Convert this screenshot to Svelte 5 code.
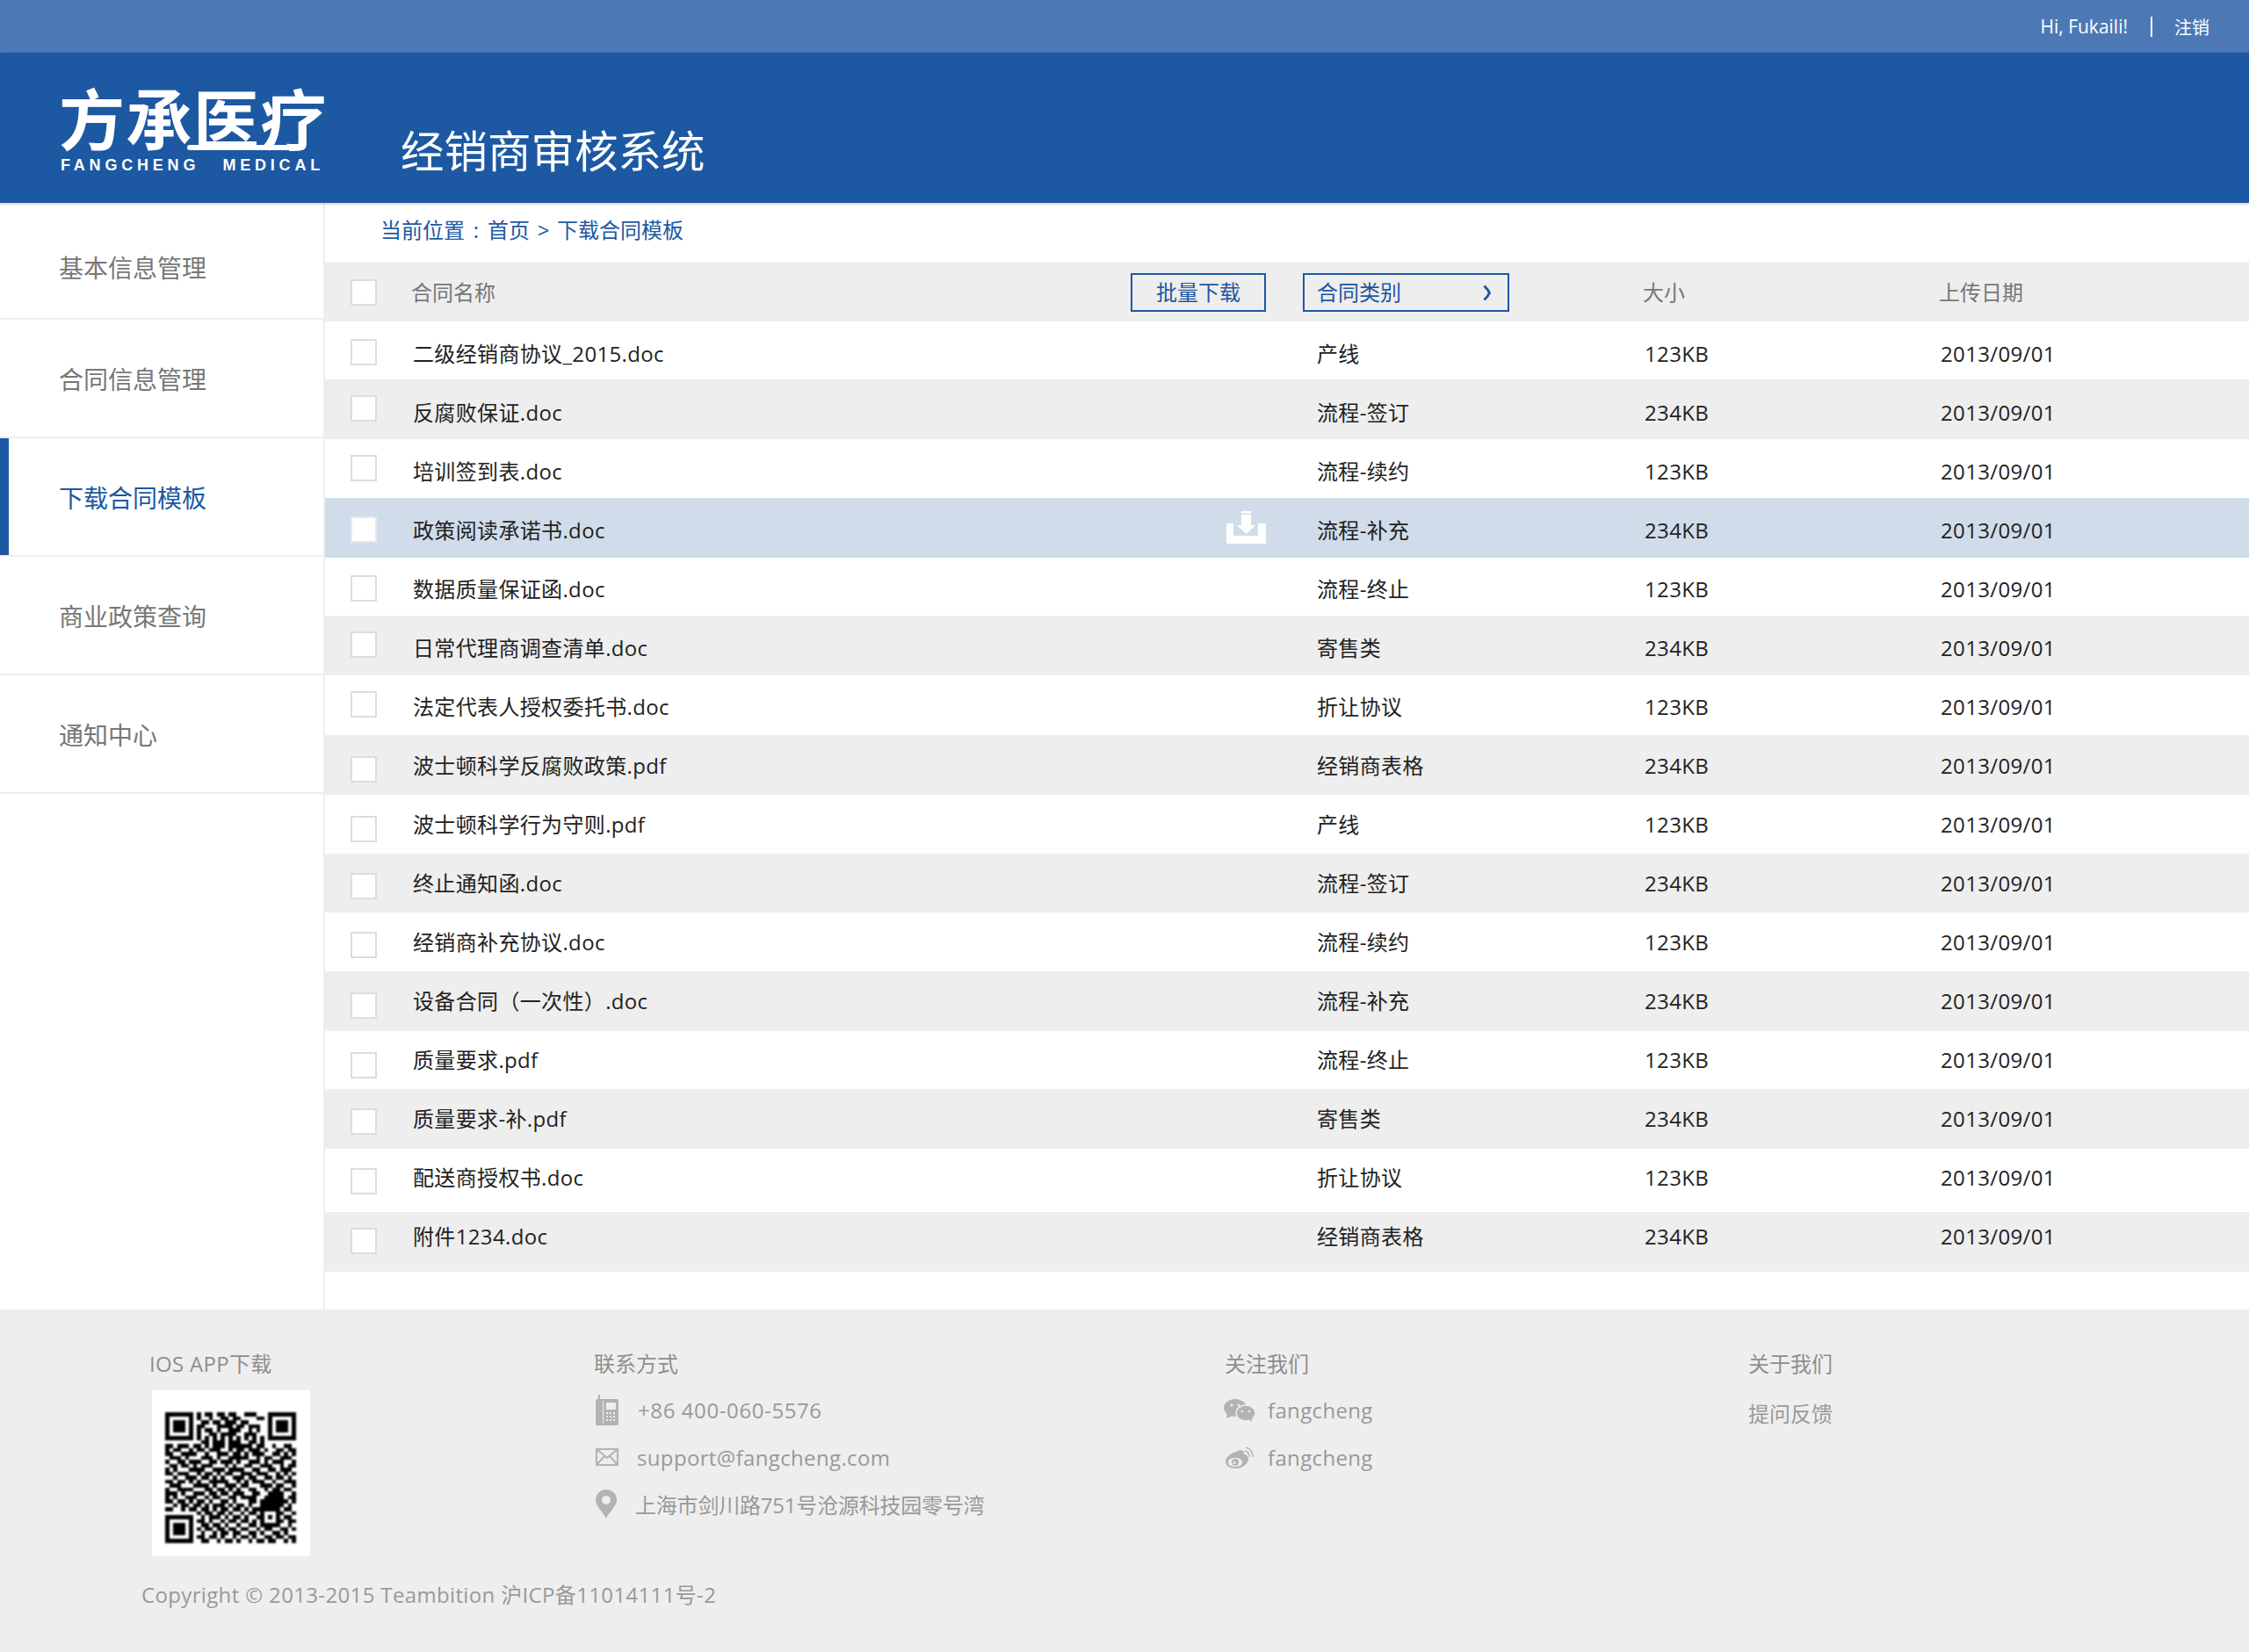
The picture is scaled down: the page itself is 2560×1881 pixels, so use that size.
<script>
    const blue = '#1d58a2';

    const names = [
        ['基本信息管理', false], ['合同信息管理', false], ['下载合同模板', true],
        ['商业政策查询', false], ['通知中心', false]
    ];

    // row tops are not regular in the design, so each one keeps its own box offset
    const rowData = [
        ['二级经销商协议_2015.doc', '产线', '123KB', 386, 366],
        ['反腐败保证.doc', '流程-签订', '234KB', 450, 432],
        ['培训签到表.doc', '流程-续约', '123KB', 518, 500],
        ['政策阅读承诺书.doc', '流程-补充', '234KB', 588, 567],
        ['数据质量保证函.doc', '流程-终止', '123KB', 655, 635],
        ['日常代理商调查清单.doc', '寄售类', '234KB', 719, 701],
        ['法定代表人授权委托书.doc', '折让协议', '123KB', 787, 769],
        ['波士顿科学反腐败政策.pdf', '经销商表格', '234KB', 861, 837],
        ['波士顿科学行为守则.pdf', '产线', '123KB', 929, 905],
        ['终止通知函.doc', '流程-签订', '234KB', 994, 972],
        ['经销商补充协议.doc', '流程-续约', '123KB', 1061, 1039],
        ['设备合同（一次性）.doc', '流程-补充', '234KB', 1130, 1106],
        ['质量要求.pdf', '流程-终止', '123KB', 1198, 1174],
        ['质量要求-补.pdf', '寄售类', '234KB', 1262, 1240],
        ['配送商授权书.doc', '折让协议', '123KB', 1330, 1308],
        ['附件1234.doc', '经销商表格', '234KB', 1398, 1380]
    ];
    const rowEnd = 1448;
    const rows = rowData.map(([name, type, size, box, top], i) => {
        const next = i < rowData.length - 1 ? rowData[i + 1][4] : rowEnd;
        return {
            name, type, size,
            height: next - top,
            boxTop: box - top,
            textTop: 386 + 67 * i - top,
            striped: i % 2 === 1,
            active: i === 3
        };
    });

    const qr = [
        '111111101011011011001110001111111',
        '100000101001001101100001101000001',
        '101110100110110111011000001011101',
        '101110101100011110110111001011101',
        '101110101011010011100101001011101',
        '100000101001101111001110001000001',
        '111111101010101010101010101111111',
        '000000000110111011100110100000000',
        '110111011010111011111101100100110',
        '101100101101110010110111010011011',
        '110011110010011101101011100110101',
        '011101000111010011111001011001110',
        '100110111001101110100111010111001',
        '011011010111000101001100111001011',
        '101000111100111011110011001101110',
        '110111001011010110011101110010101',
        '001001110110101001110110011011010',
        '110110101001111100101011100100111',
        '011100011110100111011000111011001',
        '100111100011011010100110010110110',
        '111010011101101101110011001111001',
        '101001110010110011011110011111011',
        '110110101101001101000110111111101',
        '001011011010111010110100111111010',
        '110010110110101101101011111110110',
        '000000001011011010010110100011001',
        '111111100101110101101001101010110',
        '100000101101001011011010100011011',
        '101110100110110100100110111110010',
        '101110101011011011011001011001101',
        '101110100100101101100110100110100',
        '100000101101101001011010011011011',
        '111111100110010110100101101100101'
    ];
    const qrCells = qr.flatMap((line, y) =>
        [...line].flatMap((c, x) => (c === '1' ? [{ x, y }] : []))
    );
</script>

<div class="page">
    <div class="topbar">
        <span class="hi">Hi, Fukaili!</span>
        <span class="sep"></span>
        <a class="logout" href="#top">注销</a>
    </div>

    <header class="head">
        <div class="logo">
            <div class="mark">方承医疗</div>
            <div class="mark-en"><span>FANGCHENG</span><span>MEDICAL</span></div>
        </div>
        <div class="title">经销商审核系统</div>
    </header>

    <div class="body">
        <nav class="side">
            {#each names as [label, on]}
                <a class="nav" class:on href="#top">{label}</a>
            {/each}
        </nav>

        <main class="main">
            <div class="crumb">
                <span>当前位置</span><span class="colon">:</span><span>首页</span><span class="gt">&gt;</span><span>下载合同模板</span>
            </div>

            <div class="row thead">
                <span class="box"></span>
                <div class="name-cell">
                    <span class="hd">合同名称</span>
                    <button class="btn batch">批量下载</button>
                </div>
                <div>
                    <button class="btn cat">
                        <span>合同类别</span>
                        <svg width="11" height="19" viewBox="0 0 11 19">
                            <path d="M2.500 1.500 Q7 6 8.500 9.500 Q7 13 2.500 17.500" fill="none" stroke={blue} stroke-width="3" />
                        </svg>
                    </button>
                </div>
                <div class="hd">大小</div>
                <div class="hd">上传日期</div>
            </div>

            {#each rows as r}
                <div class="row" class:striped={r.striped} class:active={r.active} style="height:{r.height}px">
                    <span class="box" style="margin-top:{r.boxTop}px"></span>
                    <div class="name-cell text" style="margin-top:{r.textTop}px">
                        <span>{r.name}</span>
                        {#if r.active}
                            <svg class="dl" width="45" height="37" viewBox="0 0 45 37">
                                <path fill="#fff" d="M0 14h8v14h28V14h9v23H0z" />
                                <path fill="#fff" d="M17 0h11v2.500H17zM17 4h11v12h5L22.500 26 12 16h5z" />
                            </svg>
                        {/if}
                    </div>
                    <div class="text" style="margin-top:{r.textTop}px">{r.type}</div>
                    <div class="text" style="margin-top:{r.textTop}px">{r.size}</div>
                    <div class="text" style="margin-top:{r.textTop}px">2013/09/01</div>
                </div>
            {/each}
        </main>
    </div>

    <footer class="foot">
        <div class="cols">
            <div class="col">
                <div class="ft-title ios">IOS APP下载</div>
                <div class="qr">
                    <svg width="149" height="149" viewBox="0 0 33 33" shape-rendering="crispEdges">
                        {#each qrCells as c}
                            <rect x={c.x} y={c.y} width="1" height="1" fill="#000" />
                        {/each}
                    </svg>
                </div>
            </div>

            <div class="col">
                <div class="ft-title">联系方式</div>
                <div class="ft-line first">
                    <svg class="ic" width="26" height="35" viewBox="0 0 26 35">
                        <path fill="#b3b3b3" d="M3 0h2v5h19a2 2 0 0 1 2 2v26a2 2 0 0 1-2 2H2a2 2 0 0 1-2-2V7a2 2 0 0 1 2-2h1z" />
                        <path fill="#eee" d="M8 7h1v26H8zM12 9h11v8H12z" />
                        <path fill="#eee" d="M12 20h2v2h-2zM16 20h2v2h-2zM20 20h2v2h-2zM12 24h2v2h-2zM16 24h2v2h-2zM20 24h2v2h-2zM12 28h2v2h-2zM16 28h2v2h-2zM20 28h2v2h-2z" />
                    </svg>
                    <span class="phone">+86 400-060-5576</span>
                </div>
                <div class="ft-line">
                    <svg class="ic" width="26" height="24" viewBox="0 0 26 24">
                        <path fill="none" stroke="#b3b3b3" stroke-width="2" d="M1 3h24v18H1zM1 3l12 10L25 3M1 21l9-10M25 21l-9-10" />
                    </svg>
                    <span class="num">support@fangcheng.com</span>
                </div>
                <div class="ft-line">
                    <svg class="ic" width="24" height="33" viewBox="0 0 24 33">
                        <path fill="#b3b3b3" fill-rule="evenodd" d="M12 0a12 12 0 0 1 12 12c0 7-8 13-12 21C8 25 0 19 0 12A12 12 0 0 1 12 0zm0 7a5 5 0 1 0 0 10 5 5 0 0 0 0-10z" />
                    </svg>
                    <span class="addr">上海市剑川路751号沧源科技园零号湾</span>
                </div>
            </div>

            <div class="col">
                <div class="ft-title">关注我们</div>
                <div class="ft-line first">
                    <svg class="ic social" width="36" height="26" viewBox="0 0 36 26">
                        <ellipse cx="13" cy="10" rx="13" ry="10" fill="#b3b3b3" />
                        <path fill="#b3b3b3" d="M4 16l-1 6 7-3z" />
                        <ellipse cx="25" cy="16" rx="11" ry="9" fill="#b3b3b3" stroke="#eee" stroke-width="1.500" />
                        <path fill="#b3b3b3" d="M29 23l3 3 0-5z" />
                        <circle cx="9" cy="7" r="1.500" fill="#eee" />
                        <circle cx="17" cy="7" r="1.500" fill="#eee" />
                        <circle cx="21" cy="14" r="1.300" fill="#eee" />
                        <circle cx="29" cy="14" r="1.300" fill="#eee" />
                    </svg>
                    <span class="num">fangcheng</span>
                </div>
                <div class="ft-line">
                    <svg class="ic social" width="36" height="25" viewBox="0 0 36 25">
                        <path fill="#b3b3b3" fill-rule="evenodd" d="M14 6c5-3 9-2 9 1 0 1 0 2 0 2 3 0 5 2 5 5 0 6-7 11-14 11C7 25 2 22 2 17c0-4 5-9 12-11zm-1 7c-5 0-8 2-8 5s3 5 8 5 8-2 8-5-3-5-8-5z" />
                        <circle cx="13" cy="18" r="4" fill="#b3b3b3" />
                        <circle cx="12" cy="18.500" r="1.600" fill="#eee" />
                        <path fill="none" stroke="#b3b3b3" stroke-width="1.500" d="M24 5a6 6 0 0 1 5 7M25 1a10 10 0 0 1 8 11" />
                    </svg>
                    <span class="num">fangcheng</span>
                </div>
            </div>

            <div class="col">
                <div class="ft-title">关于我们</div>
                <div class="ft-line first feedback">提问反馈</div>
            </div>
        </div>
        <div class="copy">Copyright © 2013-2015 Teambition 沪ICP备11014111号-2</div>
    </footer>
</div>

<style>
    :global(body) {
        margin: 0;
        background: #fff;
        font-family: "Open Sans", "Noto Sans CJK SC", sans-serif;
    }

    .page {
        width: 2560px;
        font-size: 24px;
    }

    .topbar {
        height: 60px;
        background: #4c79b5;
        display: flex;
        align-items: center;
        padding-right: 45px;
        justify-content: flex-end;
        font-size: 20px;
        color: #fff;
    }

    .hi {
        font-size: 21px;
    }

    .sep {
        width: 2px;
        height: 23px;
        background: #fff;
        margin: 0 25px 0 26px;
    }

    .logout {
        color: #fff;
        text-decoration: none;
    }

    .head {
        height: 171px;
        background: #1d58a2;
        display: flex;
        color: #fff;
        position: relative;
        box-shadow: 0 1px 3px rgba(0, 0, 0, 0.25);
    }

    .logo {
        width: 300px;
        margin-left: 69px;
        padding-top: 33px;
    }

    .mark {
        font-family: "Noto Sans CJK SC", sans-serif;
        font-size: 75px;
        line-height: 80px;
        font-weight: 700;
        letter-spacing: 1.500px;
        white-space: nowrap;
        height: 86px;
        margin-left: -2px;
        position: relative;
    }

    .mark::after {
        content: "";
        position: absolute;
        left: 146px;
        top: 72px;
        width: 129px;
        height: 6px;
        border-radius: 3px;
        background: #fff;
    }

    .mark-en {
        display: flex;
        justify-content: space-between;
        font-family: "Liberation Sans", sans-serif;
        font-weight: 700;
        font-size: 18px;
        line-height: 18px;
        letter-spacing: 4.800px;
    }

    .title {
        font-size: 49.500px;
        line-height: 60px;
        margin: 82px 0 0 87px;
        white-space: nowrap;
    }

    .body {
        display: flex;
        min-height: 1260px;
    }

    .side {
        width: 368px;
        border-right: 2px solid #eee;
        display: flex;
        flex-direction: column;
    }

    .nav {
        height: 133px;
        box-sizing: border-box;
        display: flex;
        align-items: center;
        padding-left: 67px;
        font-size: 28px;
        color: #777;
        text-decoration: none;
        border-bottom: 2px solid #eee;
        flex: none;
    }

    .nav:first-child {
        height: 133px;
        padding-top: 14px;
    }

    .nav:not(:first-child) {
        height: 135px;
    }

    .nav.on {
        color: #1d58a2;
        box-shadow: inset 10px 0 0 #1d58a2;
    }

    .main {
        flex: 1;
    }

    .crumb {
        height: 67px;
        padding: 14px 0 0 63px;
        box-sizing: border-box;
        color: #1d58a2;
        line-height: 34px;
        display: flex;
        align-items: flex-start;
    }

    .colon {
        width: 26px;
        text-align: center;
    }

    .gt {
        width: 31px;
        text-align: center;
    }

    .row {
        display: grid;
        grid-template-columns: 71px 1029px 373px 337px 1fr;
        padding-left: 29px;
        align-items: start;
        color: #222;
    }

    .thead {
        height: 68px;
        box-sizing: border-box;
        padding-top: 2px;
        background: #eee;
        color: #777;
        line-height: 34px;
        align-items: center;
    }

    .hd {
        margin-left: -2px;
    }

    .row.striped {
        background: #eee;
    }

    .row.active {
        background: #d0dcea;
    }

    .box {
        width: 26px;
        height: 26px;
        border: 2px solid #ddd;
        background: #fff;
        display: block;
    }

    .active .box {
        border-color: #e3e8f0;
    }

    .name-cell {
        display: flex;
        align-items: center;
        justify-content: space-between;
        padding-right: 58px;
        height: 34px;
    }

    .text {
        line-height: 34px;
        letter-spacing: 0.350px;
    }

    .num {
        letter-spacing: 0.350px;
    }

    .phone {
        letter-spacing: 0.600px;
        margin-left: 1px;
    }

    .addr {
        letter-spacing: -0.200px;
    }

    .dl {
        margin-top: -7px;
    }

    .btn {
        height: 44px;
        box-sizing: border-box;
        border: 2px solid #1d58a2;
        background: transparent;
        color: #1d58a2;
        font: inherit;
        padding: 0;
    }

    .batch {
        width: 154px;
    }

    .cat {
        width: 235px;
        margin-left: -16px;
        display: flex;
        align-items: center;
        justify-content: space-between;
        padding: 0 18px 0 14px;
    }

    .foot {
        background: #eee;
        height: 390px;
        color: #999;
        box-sizing: border-box;
        padding-top: 45px;
    }

    .cols {
        display: grid;
        grid-template-columns: 505px 718px 596px 1fr;
        padding-left: 171px;
        height: 253px;
    }

    .ft-title {
        line-height: 34px;
        color: #8e8e8e;
    }

    .ios {
        margin-left: -1px;
        letter-spacing: 0.300px;
    }

    .qr {
        width: 180px;
        height: 189px;
        background: #fff;
        margin: 13px 0 0 2px;
        padding: 25px 0 0 15px;
        box-sizing: border-box;
    }

    .qr svg {
        display: block;
        filter: blur(0.8px);
    }

    .ft-line {
        height: 53.500px;
        display: flex;
        align-items: center;
        white-space: nowrap;
        color: #999;
    }

    .ft-line.first {
        margin-top: 9px;
    }

    .ft-line.feedback {
        margin-top: 12px;
    }

    .ic {
        flex: none;
        margin: 0 21px 0 2px;
    }

    .ic.social {
        margin: 0 14px 0 -1px;
    }

    .copy {
        padding: 10px 0 0 161px;
        line-height: 34px;
        letter-spacing: 0.350px;
    }
</style>
